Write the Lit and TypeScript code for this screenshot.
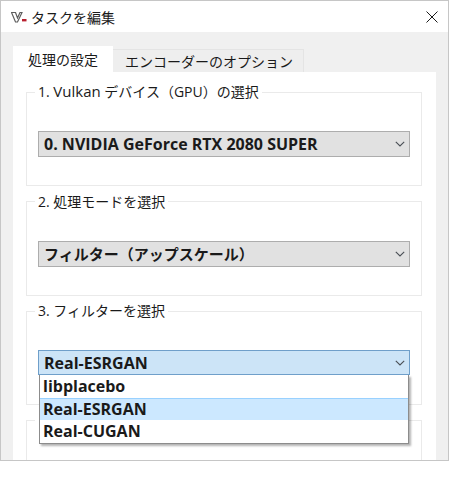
import { css, html, LitElement } from 'lit';
import { customElement } from 'lit/decorators.js';

const chevron = html`<svg class="chevron" width="10" height="6" viewBox="0 0 10 6">
  <path d="M0.8 0.8 L5 5 L9.2 0.8" fill="none" stroke="#4a4f55" stroke-width="1.1" />
</svg>`;

@customElement('app-root')
export class AppRoot extends LitElement {
  static override styles = css`
    :host {
      display: block;
      width: 450px;
      height: 481px;
      background: #fff;
      font-family: 'Open Sans', 'Noto Sans CJK JP', sans-serif;
      font-size: 14px;
      color: #1a1a1a;
    }

    .window {
      box-sizing: border-box;
      width: 449px;
      height: 461px;
      border: 1px solid #c6c6c6;
      background: #f0f0f0;
      overflow: hidden;
    }

    .titlebar {
      height: 31px;
      background: #fff;
      display: flex;
      align-items: center;
      padding-left: 10px;
      gap: 4px;
    }

    .logo {
      flex: none;
      margin-top: 1px;
    }

    .title {
      flex: 1;
      font-family: 'Noto Sans CJK JP', sans-serif;
      font-size: 14px;
      line-height: 20px;
    }

    .close {
      margin-right: 10px;
    }

    .body {
      padding: 14px 12px 0;
    }

    .tabs {
      display: flex;
      align-items: flex-end;
      height: 26px;
    }

    .tab {
      box-sizing: border-box;
      font-family: 'Noto Sans CJK JP', sans-serif;
      display: flex;
      align-items: center;
      justify-content: center;
    }

    .tab.active {
      width: 100px;
      height: 26px;
      background: #fff;
    }

    .tab.idle {
      width: 191px;
      height: 23px;
      padding-left: 2px;
      background: #eeeeee;
      border: 1px solid #e4e4e4;
      border-bottom: none;
      border-left: none;
    }

    .panel {
      position: relative;
      background: #fff;
      padding: 10px 14px 0 13px;
      height: 400px;
    }

    fieldset {
      margin: 0 0 5.5px;
      padding: 29px 11px 28px;
      border: 1px solid #eaeaea;
      min-width: 0;
    }

    legend {
      box-sizing: border-box;
      height: 20px;
      margin-left: -3px;
      padding: 0 3px;
      line-height: 20px;
      white-space: nowrap;
    }

    .latin {
      font-size: 15px;
      line-height: 1;
    }

    .select {
      position: relative;
      box-sizing: border-box;
      height: 26px;
      display: flex;
      align-items: center;
      justify-content: space-between;
      padding: 0 4px 0 5px;
      background: #e1e1e1;
      border: 1px solid #adadad;
      font-size: 16px;
      font-weight: 700;
    }

    .select.cjk {
      font-size: 15px;
    }

    .select.open {
      height: 25px;
      margin-bottom: 1px;
      background: #cce4f7;
      border-color: #6f9fca;
    }

    .chevron {
      flex: none;
    }

    .list {
      position: absolute;
      top: 24px;
      left: 0;
      right: 0;
      background: #fff;
      border: 1px solid #8c8c8c;
      border-top: none;
      box-shadow: 2px 2px 2px rgba(0, 0, 0, 0.3);
    }

    .item {
      height: 22.5px;
      display: flex;
      align-items: center;
      padding-left: 3px;
    }

    .item.current {
      background: #cce8ff;
      box-shadow: inset 0 1px 0 #99d1ff;
    }
  `;

  protected override render() {
    return html`<div class="window">
      <div class="titlebar">
        <svg class="logo" width="16" height="11" viewBox="0 0 16 11">
          <path d="M0.5 0.5 H4.5 L6.5 6 L9 0.5 H11 L6.5 10 H4.5 Z" fill="#fff" stroke="#5e5e5e" stroke-width="1.2" />
          <rect x="11" y="7" width="4.5" height="2.4" fill="#b8202f" />
        </svg>
        <span class="title">タスクを編集</span>
        <svg class="close" width="12" height="12" viewBox="0 0 12 12">
          <path d="M0.5 0.5 L11.5 11.5 M11.5 0.5 L0.5 11.5" fill="none" stroke="#1a1a1a" stroke-width="1" />
        </svg>
      </div>
      <div class="body">
        <div class="tabs">
          <div class="tab active">処理の設定</div>
          <div class="tab idle">エンコーダーのオプション</div>
        </div>
        <div class="panel">
          <fieldset>
            <legend>1. <span class="latin">Vulkan</span> デバイス（GPU）の選択</legend>
            <div class="select">0. NVIDIA GeForce RTX 2080 SUPER ${chevron}</div>
          </fieldset>
          <fieldset>
            <legend>2. 処理モードを選択</legend>
            <div class="select cjk">フィルター（アップスケール） ${chevron}</div>
          </fieldset>
          <fieldset>
            <legend>3. フィルターを選択</legend>
            <div class="select open">
              Real-ESRGAN ${chevron}
              <div class="list">
                <div class="item">libplacebo</div>
                <div class="item current">Real-ESRGAN</div>
                <div class="item">Real-CUGAN</div>
              </div>
            </div>
          </fieldset>
          <fieldset>
            <legend>&nbsp;</legend>
          </fieldset>
        </div>
      </div>
    </div>`;
  }
}
